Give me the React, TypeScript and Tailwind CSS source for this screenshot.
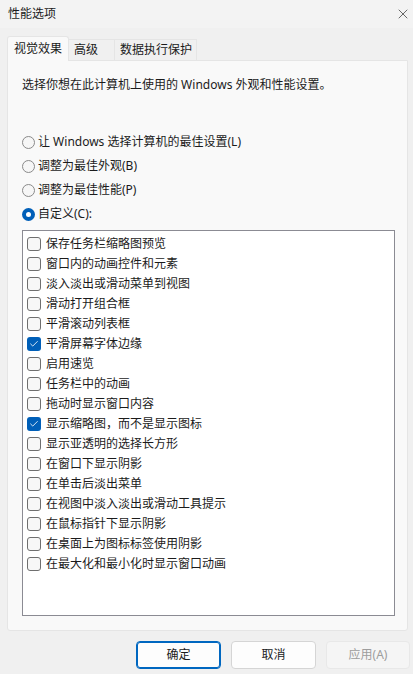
import { X, Check } from "lucide-react";

const options = [
  { label: "保存任务栏缩略图预览", checked: false },
  { label: "窗口内的动画控件和元素", checked: false },
  { label: "淡入淡出或滑动菜单到视图", checked: false },
  { label: "滑动打开组合框", checked: false },
  { label: "平滑滚动列表框", checked: false },
  { label: "平滑屏幕字体边缘", checked: true },
  { label: "启用速览", checked: false },
  { label: "任务栏中的动画", checked: false },
  { label: "拖动时显示窗口内容", checked: false },
  { label: "显示缩略图，而不是显示图标", checked: true },
  { label: "显示亚透明的选择长方形", checked: false },
  { label: "在窗口下显示阴影", checked: false },
  { label: "在单击后淡出菜单", checked: false },
  { label: "在视图中淡入淡出或滑动工具提示", checked: false },
  { label: "在鼠标指针下显示阴影", checked: false },
  { label: "在桌面上为图标标签使用阴影", checked: false },
  { label: "在最大化和最小化时显示窗口动画", checked: false },
];

const radios = [
  { label: "让 Windows 选择计算机的最佳设置(L)", checked: false },
  { label: "调整为最佳外观(B)", checked: false },
  { label: "调整为最佳性能(P)", checked: false },
  { label: "自定义(C):", checked: true },
];

function Radio({ checked }: { checked: boolean }) {
  if (checked) {
    return (
      <span className="flex h-[13px] w-[13px] shrink-0 items-center justify-center rounded-full bg-[#005fb8]">
        <span className="h-[5px] w-[5px] rounded-full bg-white" />
      </span>
    );
  }
  return <span className="h-[13px] w-[13px] shrink-0 rounded-full border border-[#8a8a8a] bg-[#f6f6f6]" />;
}

function CheckBox({ checked }: { checked: boolean }) {
  if (checked) {
    return (
      <span className="flex h-[14px] w-[14px] shrink-0 items-center justify-center rounded-[3px] bg-[#005fb8]">
        <Check className="h-[10px] w-[10px] text-white" strokeWidth={2} />
      </span>
    );
  }
  return <span className="h-[14px] w-[14px] shrink-0 rounded-[3px] border border-[#6f6f6f] bg-[#f7f7f7]" />;
}

export default function App() {
  return (
    <div
      className="flex h-[674px] w-[413px] flex-col bg-[#f0f0f0] text-[12px] text-[#1b1b1b]"
      style={{ fontFamily: '"Noto Sans", "Noto Sans CJK SC", sans-serif' }}
    >
      {/* title bar */}
      <div className="flex h-[28px] items-center justify-between bg-[#f3f3f3] pl-2 pr-[2px]">
        <span className="leading-4">性能选项</span>
        <X className="h-[16px] w-[16px] text-[#333]" strokeWidth={1.1} />
      </div>

      {/* tabs */}
      <div className="mt-2 flex h-[24px] items-end pl-[7px]">
        <div className="relative z-10 -mb-px flex h-[25px] w-[62px] items-center rounded-t-[3px] border border-b-0 border-[#e5e5e5] bg-[#f9f9f9] pl-[6px] leading-4">
          视觉效果
        </div>
        <div className="flex h-[21px] w-[46px] items-center border-t border-r border-[#e5e5e5] bg-[#f0f0f0] pl-[5px] leading-4">
          高级
        </div>
        <div className="flex h-[21px] w-[82px] items-center border-t border-r border-[#e5e5e5] bg-[#f0f0f0] pl-[5px] leading-4">
          数据执行保护
        </div>
      </div>

      {/* panel */}
      <div className="mx-[5px] ml-[7px] flex h-[571px] flex-col rounded-b-[3px] border border-[#e5e5e5] bg-[#f9f9f9] pl-[14px] pr-[12px] pt-[16px]">
        <p className="leading-4">选择你想在此计算机上使用的 Windows 外观和性能设置。</p>

        <div className="mt-[37px] flex flex-col">
          {radios.map((r) => (
            <div key={r.label} className="flex h-[24px] items-center gap-[3px]">
              <Radio checked={r.checked} />
              <span className="leading-4">{r.label}</span>
            </div>
          ))}
        </div>

        <div className="mt-[4px] h-[386px] border border-[#8b8b93] bg-white pl-[4px] pt-[3px]">
          {options.map((o) => (
            <div key={o.label} className="flex h-[20px] items-center gap-[5px]">
              <CheckBox checked={o.checked} />
              <span className="leading-4">{o.label}</span>
            </div>
          ))}
        </div>
      </div>

      {/* buttons */}
      <div className="mt-[10px] flex justify-end gap-[10px] pr-[3px]">
        <button className="flex h-[28px] w-[85px] items-center justify-center rounded-[4px] border border-[#0067c0] bg-[#fdfdfd] shadow-[inset_0_0_0_1px_#0067c0]">
          确定
        </button>
        <button className="flex h-[28px] w-[85px] items-center justify-center rounded-[4px] border border-[#d5d5d5] bg-[#fdfdfd]">
          取消
        </button>
        <button className="flex h-[28px] w-[84px] items-center justify-center rounded-[4px] border border-[#e8e8e8] bg-[#f5f5f5] text-[#9d9d9d]">
          应用(A)
        </button>
      </div>
    </div>
  );
}
